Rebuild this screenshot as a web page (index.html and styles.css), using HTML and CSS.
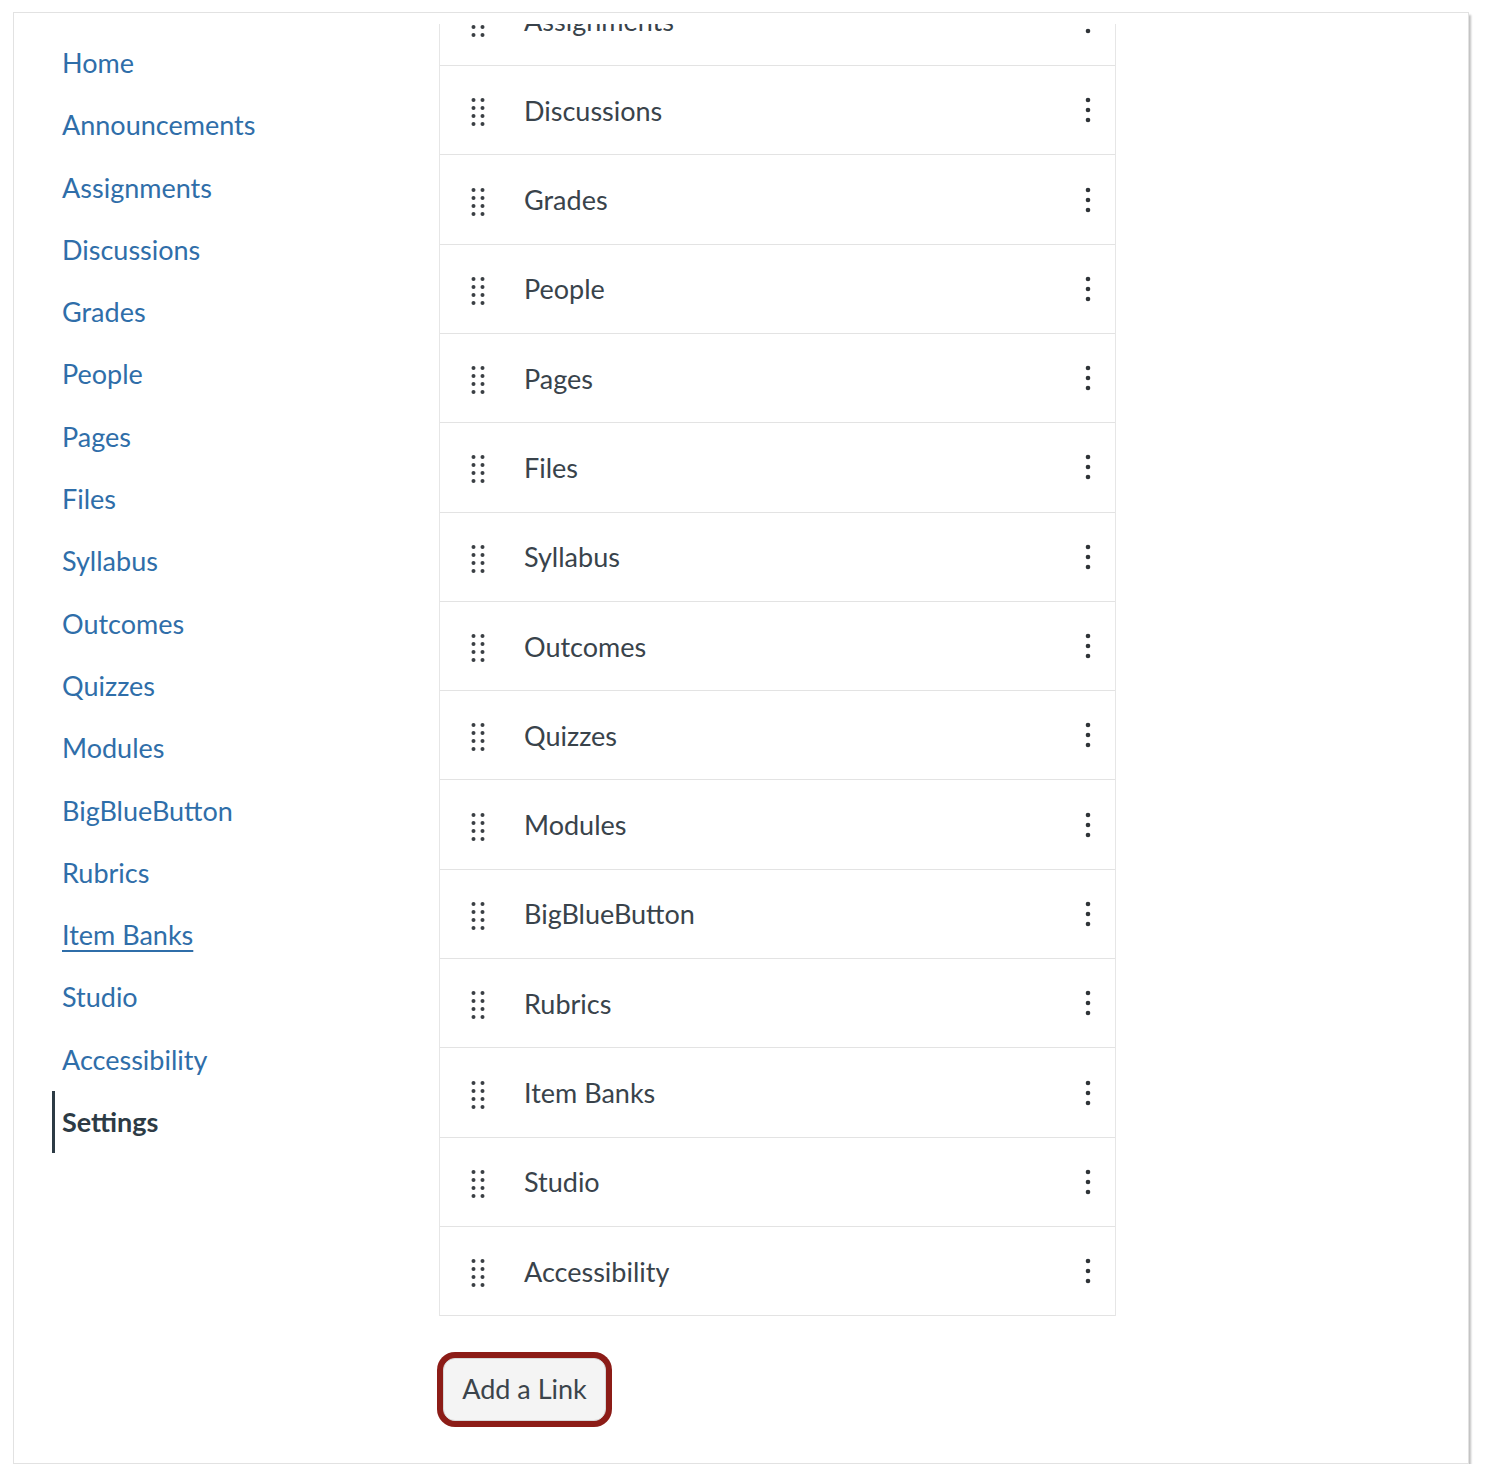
FILE: index.html
```html
<!DOCTYPE html>
<html lang="en">
<head>
    <meta charset="UTF-8">
    <meta name="viewport" content="width=device-width, initial-scale=1.0">
    <title>Navigation Settings</title>
    <link rel="stylesheet" href="styles.css">
</head>
<body>
    <div class="window">
        <nav class="course-nav">
            <a href="#">Home</a>
            <a href="#">Announcements</a>
            <a href="#">Assignments</a>
            <a href="#">Discussions</a>
            <a href="#">Grades</a>
            <a href="#">People</a>
            <a href="#">Pages</a>
            <a href="#">Files</a>
            <a href="#">Syllabus</a>
            <a href="#">Outcomes</a>
            <a href="#">Quizzes</a>
            <a href="#">Modules</a>
            <a href="#">BigBlueButton</a>
            <a href="#">Rubrics</a>
            <a href="#" class="hover">Item Banks</a>
            <a href="#">Studio</a>
            <a href="#">Accessibility</a>
            <a href="#" class="active">Settings</a>
        </nav>

        <main class="nav-settings">
            <div class="tab-viewport">
                <ul class="tab-list" id="tabList"></ul>
            </div>
            <button class="add-link">Add a Link</button>
        </main>
    </div>

    <script>
        const tabs = ["Assignments", "Discussions", "Grades", "People", "Pages", "Files",
            "Syllabus", "Outcomes", "Quizzes", "Modules", "BigBlueButton", "Rubrics",
            "Item Banks", "Studio", "Accessibility"];

        const handle = '<svg class="handle" width="14" height="30" viewBox="0 0 14 30">' +
            [3, 11, 19, 27].map(y =>
                `<circle cx="2.5" cy="${y}" r="2"/><circle cx="11.5" cy="${y}" r="2"/>`
            ).join("") + '</svg>';

        const kebab = '<svg class="kebab" width="6" height="26" viewBox="0 0 6 26">' +
            '<circle cx="3" cy="3" r="2.3"/><circle cx="3" cy="13" r="2.3"/><circle cx="3" cy="23" r="2.3"/></svg>';

        const list = document.getElementById("tabList");
        tabs.forEach(name => {
            const li = document.createElement("li");
            li.className = "tab-row";
            li.innerHTML = handle + `<span class="tab-name">${name}</span>` + kebab;
            list.appendChild(li);
        });
    </script>
</body>
</html>
```

FILE: styles.css
```css
body {
    margin: 0;
    background: #fff;
    font-family: Lato, "Open Sans", sans-serif;
}
.window {
    margin: 12px 0 0 13px;
    width: 1456px;
    height: 1452px;
    border: 1px solid #e2e2e2;
    box-shadow: 2px 3px 2px rgba(0, 0, 0, 0.25);
    display: grid;
    grid-template-columns: 425px 677px;
    box-sizing: border-box;
}
.course-nav {
    display: flex;
    flex-direction: column;
    padding: 19px 0 0 38px;
}
.course-nav a {
    display: block;
    line-height: 62.3px;
    padding-left: 7px;
    font-size: 27px;
    color: #2f6ea9;
    text-decoration: none;
    border-left: 3px solid transparent;
    align-self: flex-start;
}
.course-nav a.hover {
    text-decoration: underline;
    text-underline-offset: 5px;
}
.course-nav a.active {
    color: #2d3b45;
    font-weight: bold;
    border-left-color: #2d3b45;
}
.nav-settings {
    padding-top: 11px;
}
.tab-viewport {
    height: 1292px;
    overflow: hidden;
}
.tab-list {
    list-style: none;
    margin: -47.2px 0 0;
    padding: 0;
    border-left: 1px solid #e6e6e6;
    border-right: 1px solid #e6e6e6;
}
.tab-row {
    display: flex;
    align-items: center;
    height: 88.3px;
    border-bottom: 1px solid #e3e3e3;
    padding: 0 24px 0 31px;
    color: #39434b;
    font-size: 27px;
}
.handle {
    fill: #3a3f44;
    margin-top: 4px;
}
.tab-name {
    flex: 1;
    margin-left: 39px;
}
.kebab {
    fill: #2f3438;
}
.add-link {
    margin: 42px 0 0 4px;
    width: 163px;
    height: 63px;
    padding: 0 0 3px;
    font-family: inherit;
    font-size: 27px;
    color: #3b444b;
    background: #f4f4f4;
    border: 1px solid #d8d8d8;
    border-radius: 12px;
    box-shadow: 0 0 0 6px #8c1c17;
}
```
